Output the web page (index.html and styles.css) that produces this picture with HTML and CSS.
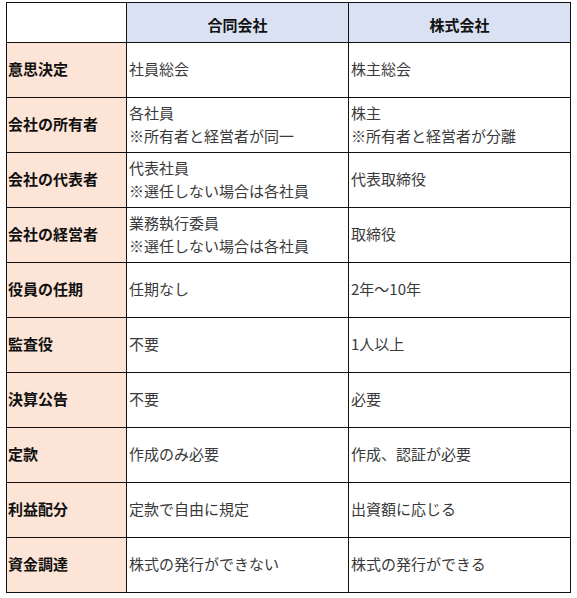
FILE: index.html
```html
<!DOCTYPE html>
<html lang="ja">
<head>
<meta charset="utf-8">
<title>合同会社と株式会社の比較</title>
<link rel="stylesheet" href="styles.css">
</head>
<body>
<div class="sheet">
  <div class="cell corner"></div>
  <div class="cell head">合同会社</div>
  <div class="cell head">株式会社</div>

  <div class="cell label">意思決定</div>
  <div class="cell data">社員総会</div>
  <div class="cell data">株主総会</div>

  <div class="cell label">会社の所有者</div>
  <div class="cell data"><span>各社員</span><span>※所有者と経営者が同一</span></div>
  <div class="cell data"><span>株主</span><span>※所有者と経営者が分離</span></div>

  <div class="cell label">会社の代表者</div>
  <div class="cell data"><span>代表社員</span><span>※選任しない場合は各社員</span></div>
  <div class="cell data">代表取締役</div>

  <div class="cell label">会社の経営者</div>
  <div class="cell data"><span>業務執行委員</span><span>※選任しない場合は各社員</span></div>
  <div class="cell data">取締役</div>

  <div class="cell label">役員の任期</div>
  <div class="cell data">任期なし</div>
  <div class="cell data">2年～10年</div>

  <div class="cell label">監査役</div>
  <div class="cell data">不要</div>
  <div class="cell data">1人以上</div>

  <div class="cell label">決算公告</div>
  <div class="cell data">不要</div>
  <div class="cell data">必要</div>

  <div class="cell label">定款</div>
  <div class="cell data">作成のみ必要</div>
  <div class="cell data">作成、認証が必要</div>

  <div class="cell label">利益配分</div>
  <div class="cell data">定款で自由に規定</div>
  <div class="cell data">出資額に応じる</div>

  <div class="cell label">資金調達</div>
  <div class="cell data">株式の発行ができない</div>
  <div class="cell data">株式の発行ができる</div>
</div>
</body>
</html>
```

FILE: styles.css
```css
html, body {
  margin: 0;
  padding: 0;
  background: #ffffff;
}

body {
  padding: 2px 0 0 6px;
  font-family: "Noto Sans CJK JP", "Noto Sans", sans-serif;
  font-size: 15px;
  color: #2a2a2a;
}

.sheet {
  display: grid;
  grid-template-columns: 120px 222px 222px;
  grid-template-rows: 40px repeat(10, 55px);
  width: 565px;
  border-left: 1px solid #111;
  border-top: 1px solid #111;
  box-sizing: border-box;
}

.cell {
  box-sizing: border-box;
  border-right: 1px solid #111;
  border-bottom: 1px solid #111;
  display: flex;
  flex-direction: column;
  justify-content: center;
  line-height: 23px;
  white-space: nowrap;
  overflow: hidden;
  padding-bottom: 3px;
}

.corner {
  background: #ffffff;
}

.head {
  background: #d9e1f2;
  font-weight: 700;
  color: #111;
  align-items: center;
  padding-top: 3px;
  padding-bottom: 0;
}

.label {
  background: #fce4d6;
  font-weight: 700;
  color: #111;
  padding-left: 1px;
}

.data {
  padding-left: 2px;
  font-weight: 400;
  color: #3a3a3a;
}

.data span {
  display: block;
}
```
